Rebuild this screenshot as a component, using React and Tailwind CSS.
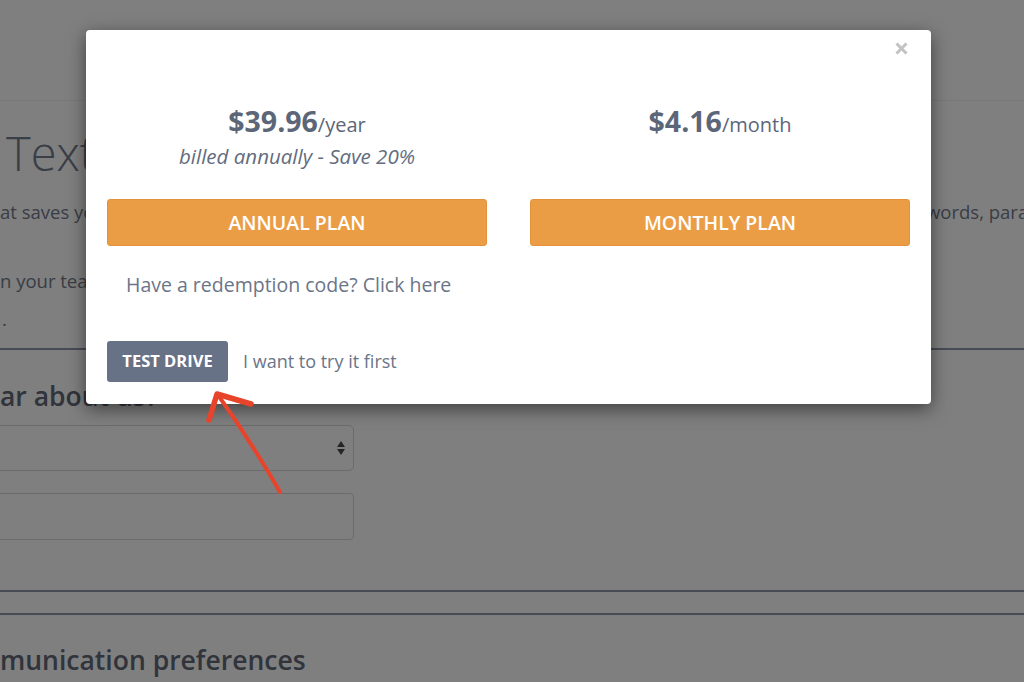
export default function App() {
  return (
    <div className="relative h-[682px] w-[1024px] overflow-hidden bg-white font-['Open_Sans',sans-serif]">
      {/* page behind the modal */}
      <div className="h-[101px] border-b border-[#f2f2f2]"></div>
      <div className="text-[#737b8c]">
        <h1 className="mt-[24px] pl-[6px] text-[47px] font-light leading-[56px] text-[#747d8e] whitespace-nowrap">
          Text
        </h1>
        <p className="mt-[17px] flex text-[18.5px] leading-[27px] whitespace-nowrap">
          <span className="w-[926px] shrink-0 overflow-hidden">at saves yo</span>
          <span className="shrink-0">words, para</span>
        </p>
        <p className="mt-[42px] text-[18.5px] leading-[27px] whitespace-nowrap">n your tea</p>
        <p className="mt-[11px] pl-[2px] text-[18.5px] leading-[27px]">.</p>
      </div>
      <div className="mt-[16px] border-b-2 border-[#8e97a6]"></div>
      <h2 className="mt-[33px] text-[26.5px] font-semibold leading-[26px] text-[#626877] whitespace-nowrap">
        ar about us?
      </h2>
      <div className="-ml-[10px] mt-[16px] flex h-[46px] w-[364px] items-center justify-end rounded-[5px] border border-[#d6d6d6] pr-[8px]">
        <svg width="8" height="14" viewBox="0 0 8 14">
          <path d="M4 0 L8 6 L0 6 Z" fill="#4b4b4b" />
          <path d="M0 8 L8 8 L4 14 Z" fill="#4b4b4b" />
        </svg>
      </div>
      <div className="-ml-[10px] mt-[22px] h-[47px] w-[364px] rounded-[4px] border border-[#d6d6d6]"></div>
      <div className="mt-[50px] border-b-2 border-[#8e97a6]"></div>
      <div className="mt-[21px] border-b-2 border-[#8e97a6]"></div>
      <h2 className="mt-[30px] text-[26.5px] font-semibold leading-[31px] text-[#626877] whitespace-nowrap">
        munication preferences
      </h2>

      {/* overlay */}
      <div className="absolute inset-0 bg-black/50"></div>

      {/* modal */}
      <div className="absolute left-[86px] top-[30px] w-[845px] rounded-[4px] bg-white px-[21px] pt-[74px] pb-[22px] shadow-[0_5px_18px_rgba(0,0,0,0.5)]">
        <button className="absolute right-[23px] top-[12px]">
          <svg width="13" height="13" viewBox="0 0 13 13">
            <path d="M1.5 1.5 L11.5 11.5 M11.5 1.5 L1.5 11.5" stroke="#c2c2c2" strokeWidth="3" />
          </svg>
        </button>

        <div className="grid grid-cols-2 gap-[43px]">
          <div>
            <div className="h-[95px] text-center text-[#5c6679]">
              <div className="leading-[34px]">
                <span className="text-[28.5px] font-bold">$39.96</span>
                <span className="text-[20px]">/year</span>
              </div>
              <div className="-mt-[1px] text-[20.5px] italic leading-[28px] text-[#626c7e]">billed annually - Save 20%</div>
            </div>
            <button className="flex h-[47px] w-full items-center justify-center rounded-[3px] border border-[#e4923a] bg-[#eb9d46] text-[19.5px] font-semibold text-white">
              ANNUAL PLAN
            </button>
          </div>
          <div>
            <div className="h-[95px] text-center text-[#5c6679]">
              <div className="leading-[34px]">
                <span className="text-[28.5px] font-bold">$4.16</span>
                <span className="text-[20px]">/month</span>
              </div>
            </div>
            <button className="flex h-[47px] w-full items-center justify-center rounded-[3px] border border-[#e4923a] bg-[#eb9d46] text-[19.5px] font-semibold text-white">
              MONTHLY PLAN
            </button>
          </div>
        </div>

        <p className="mt-[25px] pl-[19px] text-[19.5px] leading-[27px] text-[#6b7588]">Have a redemption code? Click here</p>

        <div className="mt-[43px] flex items-center">
          <button className="h-[41px] w-[121px] rounded-[3px] bg-[#687286] text-[16.5px] font-bold text-white">
            TEST DRIVE
          </button>
          <span className="ml-[15px] text-[18px] text-[#6b7588]">I want to try it first</span>
        </div>
      </div>

      {/* annotation arrow */}
      <svg className="pointer-events-none absolute left-0 top-0" width="1024" height="682" viewBox="0 0 1024 682">
        <path d="M280 492 Q250 440 218 395" fill="none" stroke="#e8442c" strokeWidth="4" strokeLinecap="round" />
        <path d="M209 420 L217 394 L251 404" fill="none" stroke="#e8442c" strokeWidth="5.5" strokeLinecap="round" strokeLinejoin="round" />
      </svg>
    </div>
  );
}
